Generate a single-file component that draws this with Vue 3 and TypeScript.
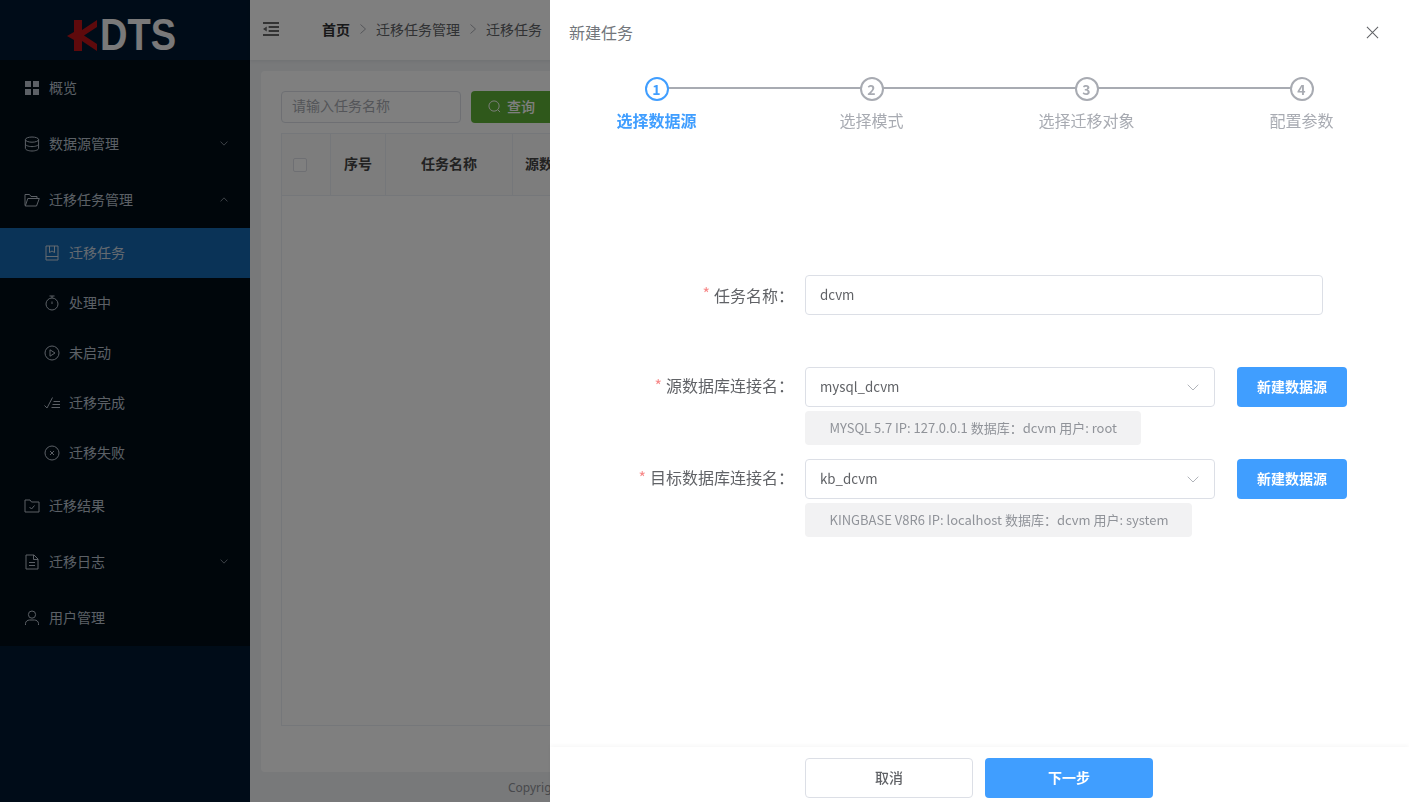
<script setup lang="ts">
type Sub = { label: string; icon: string; active?: boolean }
const subs: Sub[] = [
  { label: '迁移任务', icon: 'book', active: true },
  { label: '处理中', icon: 'timer' },
  { label: '未启动', icon: 'play' },
  { label: '迁移完成', icon: 'finished' },
  { label: '迁移失败', icon: 'fail' },
]
const steps = [
  { n: 1, label: '选择数据源', active: true },
  { n: 2, label: '选择模式' },
  { n: 3, label: '选择迁移对象' },
  { n: 4, label: '配置参数' },
]
</script>

<template>
  <div class="page">
    <aside class="side">
      <div class="logo">
        <svg class="logo-k" viewBox="0 0 31 31" aria-hidden="true">
          <path fill="#bc1419" d="M0 16 7 12V0h8v10L30 0v7L17 15.500 30 24v7L15 21v10H7V20z" />
        </svg>
        <span class="logo-t">DTS</span>
      </div>
      <nav class="menu">
        <div class="item">
          <svg class="ic" viewBox="0 0 16 16"><path fill="currentColor" stroke="none" d="M1 1h6v6H1zM9 1h6v6H9zM1 9h6v6H1zM9 9h6v6H9z" /></svg>
          <span>概览</span>
        </div>
        <div class="item">
          <svg class="ic" viewBox="0 0 16 16"><ellipse cx="8" cy="3.600" rx="6.600" ry="2.600" /><path d="M1.400 3.600v8.800c0 1.400 3 2.600 6.600 2.600s6.600-1.200 6.600-2.600V3.600M1.400 8c0 1.400 3 2.600 6.600 2.600s6.600-1.200 6.600-2.600" /></svg>
          <span>数据源管理</span>
          <svg class="arr" viewBox="0 0 10 6" preserveAspectRatio="none"><path d="M.7.7 5 5 9.300.7" /></svg>
        </div>
        <div class="item">
          <svg class="ic wide" viewBox="0 0 16 14"><path d="M1 12.500V1.500h4.500L7 3.500h6v2M1.300 13h11.200l2.800-7.500H3.800z" /></svg>
          <span>迁移任务管理</span>
          <svg class="arr" viewBox="0 0 10 6" preserveAspectRatio="none"><path d="M.7 5.300 5 1l4.300 4.300" /></svg>
        </div>
        <div v-for="s in subs" :key="s.label" class="sub" :class="{ on: s.active }">
          <svg v-if="s.icon === 'book'" class="ic" viewBox="0 0 16 16"><path d="M2 1h12v14H2zM2 11.500h12M5.500 1v6.500L8 6l2.500 1.500V1" /></svg>
          <svg v-else-if="s.icon === 'timer'" class="ic" viewBox="0 0 16 16"><circle cx="8" cy="9" r="6" /><path d="M5.500 1h5M8 1v2M8 6.500V9" /></svg>
          <svg v-else-if="s.icon === 'play'" class="ic" viewBox="0 0 16 16"><circle cx="8" cy="8" r="7" /><path d="M6 4.800v6.400L11 8z" /></svg>
          <svg v-else-if="s.icon === 'finished'" class="ic" viewBox="0 0 16 16"><path d="M.5 10.500 3 13l5.500-10.500M9.500 6.500H16M8.500 9.500H16M7.500 12.500H16" /></svg>
          <svg v-else class="ic" viewBox="0 0 16 16"><circle cx="8" cy="8" r="7" /><path d="M6 6l4 4M10 6l-4 4" /></svg>
          <span>{{ s.label }}</span>
        </div>
        <div class="item">
          <svg class="ic wide" viewBox="0 0 16 14"><path d="M1 13V1h5l1.500 2H15v10zM5.500 8 7.500 10 10.500 6.500" /></svg>
          <span>迁移结果</span>
        </div>
        <div class="item">
          <svg class="ic" viewBox="0 0 16 16"><path d="M2 1h8l4 4v10H2zM9.500 1v4.500H14M5 8.500h6M5 11.500h6" /></svg>
          <span>迁移日志</span>
          <svg class="arr" viewBox="0 0 10 6" preserveAspectRatio="none"><path d="M.7.7 5 5 9.300.7" /></svg>
        </div>
        <div class="item">
          <svg class="ic" viewBox="0 0 16 16"><circle cx="8" cy="4.600" r="3.600" /><path d="M1.500 15v-1.500c0-2 2-3.500 4-3.500h5c2 0 4 1.500 4 3.500V15" /></svg>
          <span>用户管理</span>
        </div>
      </nav>
    </aside>

    <div class="main">
      <header class="top">
        <svg class="fold" viewBox="0 0 17 14" preserveAspectRatio="none"><path fill="currentColor" d="M0 0h17v2H0zM6 4h11v2H6zM6 8h11v2H6zM0 12h17v2H0zM4 4.500v5L0 7z" /></svg>
        <div class="crumbs">
          <b>首页</b>
          <svg class="sep" viewBox="0 0 6 10"><path d="M.5.5 5.500 5 .5 9.500" /></svg>
          <span>迁移任务管理</span>
          <svg class="sep" viewBox="0 0 6 10"><path d="M.5.5 5.500 5 .5 9.500" /></svg>
          <span>迁移任务</span>
        </div>
      </header>
      <section class="body">
        <div class="card">
          <div class="filters">
            <div class="search">请输入任务名称</div>
            <div class="query">
              <svg viewBox="0 0 14 14"><circle cx="6.500" cy="6.500" r="5.500" /><path d="m10.500 10.500 2.500 2.500" /></svg>
              <span>查询</span>
            </div>
          </div>
          <div class="table">
            <div class="thead">
              <div class="th c1"><span class="check"></span></div>
              <div class="th c2">序号</div>
              <div class="th c3">任务名称</div>
              <div class="th c4">源数据库</div>
            </div>
          </div>
        </div>
      </section>
      <footer class="copy">Copyright</footer>
    </div>

    <div class="mask"></div>

    <div class="drawer">
      <div class="d-head">
        <span>新建任务</span>
        <svg class="close" viewBox="0 0 14 14"><path d="m1 1 12 12M13 1 1 13" /></svg>
      </div>
      <div class="steps">
        <div v-for="(s, i) in steps" :key="s.n" class="step" :class="{ act: s.active }">
          <div class="rail">
            <span v-if="i < steps.length - 1" class="line"></span>
            <span class="num">{{ s.n }}</span>
          </div>
          <div class="step-label">{{ s.label }}</div>
        </div>
      </div>
      <div class="form">
        <div class="row first">
          <label><em>*</em>任务名称：</label>
          <div class="box full">dcvm</div>
        </div>
        <div class="row">
          <label><em>*</em>源数据库连接名：</label>
          <div class="col">
            <div class="ctl">
              <div class="box sel">mysql_dcvm
                <svg viewBox="0 0 12 7"><path d="M.7.7 6 6 11.300.7" /></svg>
              </div>
              <div class="btn primary new">新建数据源</div>
            </div>
            <div class="hint">MYSQL 5.7 IP: 127.0.0.1 数据库：dcvm 用户: root</div>
          </div>
        </div>
        <div class="row second">
          <label><em>*</em>目标数据库连接名：</label>
          <div class="col">
            <div class="ctl">
              <div class="box sel">kb_dcvm
                <svg viewBox="0 0 12 7"><path d="M.7.7 6 6 11.300.7" /></svg>
              </div>
              <div class="btn primary new">新建数据源</div>
            </div>
            <div class="hint">KINGBASE V8R6 IP: localhost 数据库：dcvm 用户: system</div>
          </div>
        </div>
      </div>
      <div class="d-foot">
        <div class="btn plain">取消</div>
        <div class="btn primary">下一步</div>
      </div>
    </div>
  </div>
</template>

<style>
html, body { margin: 0; height: 100%; overflow: hidden; }
</style>

<style scoped>
* { box-sizing: border-box; }
.page {
  display: flex;
  width: 1409px;
  height: 802px;
  overflow: hidden;
  font-family: "Noto Sans CJK SC", "Noto Sans", sans-serif;
  font-size: 14px;
  color: #606266;
  background: #f0f2f5;
}
svg { fill: none; stroke: currentColor; display: block; }

.side { width: 250px; flex: none; background: #001930; display: flex; flex-direction: column; }
.logo { height: 60px; flex: none; display: flex; align-items: flex-start; padding: 20px 0 0 67px; }
.logo-k { width: 31px; height: 31px; margin-right: 2px; stroke: none; flex: none; }
.logo-t { font: bold 40px/30px "Liberation Sans", sans-serif; color: #f2f2f2; transform: scale(.95, 1.09); transform-origin: left center; }
.menu { background: #000c17; color: #b8c1cc; }
.item { height: 56px; display: flex; align-items: center; padding: 0 0 2px 24px; position: relative; }
.sub { height: 50px; display: flex; align-items: center; padding: 0 0 2px 44px; }
.sub.on { background: #1466ae; color: #c8d4e0; }
.ic { width: 16px; height: 16px; flex: none; margin: 2px 9px 0 0; stroke-width: 1; }
.ic.wide { height: 14px; }
.arr { position: absolute; right: 22px; top: 25px; width: 8px; height: 5px; stroke-width: .8; }

.main { flex: 1; min-width: 0; display: flex; flex-direction: column; }
.top { height: 60px; flex: none; background: #fff; display: flex; align-items: center; padding: 0 0 2px 13px; box-shadow: 0 1px 4px rgba(0, 21, 41, .08); }
.fold { width: 16px; height: 14px; stroke: none; color: #666; }
.crumbs { margin-left: 43px; display: flex; align-items: center; color: #606266; white-space: nowrap; }
.crumbs b { color: #303133; font-weight: 700; }
.sep { width: 6px; height: 10px; margin: 0 10px; color: #a8abb2; stroke-width: 1; }
.body { flex: 1; min-height: 0; padding: 11px 0 0 11px; }
.card { height: 701px; background: #fff; border-radius: 4px; padding: 20px; }
.filters { display: flex; gap: 10px; height: 32px; }
.search { width: 180px; height: 32px; border: 1px solid #dcdfe6; border-radius: 4px; padding-left: 10px; line-height: 27px; color: #a8abb2; }
.query { width: 100px; height: 32px; background: #5fb036; color: #fff; font-weight: 500; border-radius: 4px; display: flex; align-items: center; padding: 0 0 3px 17px; gap: 6px; }
.query svg { width: 13px; height: 13px; margin-top: 2px; }
.table { margin-top: 10px; height: 593px; border: 1px solid #ebeef5; }
.thead { display: flex; height: 62px; border-bottom: 1px solid #ebeef5; background: #fafafa; }
.th { display: flex; align-items: center; justify-content: center; border-right: 1px solid #ebeef5; font-weight: 700; color: #444; flex: none; padding-bottom: 3px; }
.th.c1 { width: 49px; justify-content: flex-start; padding: 0 0 0 11px; }
.c2 { width: 55px; }
.c3 { width: 127px; }
.c4 { width: 120px; justify-content: flex-start; padding-left: 12px; }
.check { width: 14px; height: 14px; border: 1px solid #dcdfe6; border-radius: 2px; background: #fff; }
.copy { height: 30px; flex: none; font: 12px/32px "Noto Sans", sans-serif; color: #909399; padding-left: 258px; white-space: nowrap; }

.mask { position: fixed; inset: 0; background: rgba(0, 0, 0, .5); }

.drawer { position: fixed; left: 550px; top: 0; width: 859px; height: 802px; background: #fff; display: flex; flex-direction: column; }
.d-head { height: 66px; flex: none; display: flex; justify-content: space-between; align-items: center; padding: 0 30px 2px 19px; font-size: 16px; color: #72767b; }
.close { width: 13px; height: 13px; stroke-width: 1.100; color: #606266; }

.steps { display: flex; margin-left: -1px; }
.step { width: 215px; display: flex; flex-direction: column; align-items: center; color: #a8abb2; flex: none; }
.rail { position: relative; width: 100%; height: 24px; display: flex; justify-content: center; margin-top: 11px; }
.line { position: absolute; left: 50%; width: 100%; top: 10px; height: 2px; background: #a8abb2; }
.num { position: relative; width: 24px; height: 24px; border-radius: 50%; border: 2px solid currentColor; background: #fff; font-size: 14px; font-weight: 700; display: flex; align-items: center; justify-content: center; line-height: 1; }
.step-label { font-size: 16px; line-height: 24px; margin-top: 7px; white-space: nowrap; }
.act { color: #409eff; }
.act .step-label { font-weight: 700; }

.form { flex: 1; min-height: 0; padding-top: 143px; }
.row { display: flex; margin-bottom: 52px; }
.row.second { margin-top: -38px; margin-bottom: 0; }
.row label { width: 244px; margin-right: 11px; flex: none; display: flex; justify-content: flex-end; line-height: 36px; font-size: 16px; color: #606266; white-space: nowrap; }
.row.first label { line-height: 40px; }
.row label em { font-style: normal; color: #f78989; margin-right: 4px; font-size: 16px; line-height: 36px; }
.box { height: 40px; border: 1px solid #dcdfe6; border-radius: 4px; padding-left: 14px; line-height: 37px; color: #606266; font-size: 13.333px; }
.full { width: 518px; }
.sel { width: 410px; position: relative; }
.sel svg { position: absolute; right: 15px; top: 16px; width: 12px; height: 7px; color: #a8abb2; stroke-width: .9; }
.col { display: flex; flex-direction: column; align-items: flex-start; }
.ctl { display: flex; gap: 22px; }
.hint { margin-top: 4px; height: 34px; line-height: 34px; background: #f2f2f3; border-radius: 4px; padding: 0 23.5px 0 24.5px; font-size: 13px; color: #909399; white-space: nowrap; }
.btn { height: 40px; border-radius: 4px; display: flex; align-items: center; justify-content: center; font-size: 14px; flex: none; padding-bottom: 2px; }
.primary { background: #409eff; color: #fff; font-weight: 700; }
.new { width: 110px; }
.plain { background: #fff; border: 1px solid #dcdfe6; color: #606266; font-weight: 500; }
.d-foot { height: 55px; flex: none; display: flex; gap: 12px; padding: 11px 0 0 255px; box-shadow: 0 -2px 4px rgba(0, 0, 0, .03); }
.d-foot .btn { width: 168px; height: 40px; }
</style>
